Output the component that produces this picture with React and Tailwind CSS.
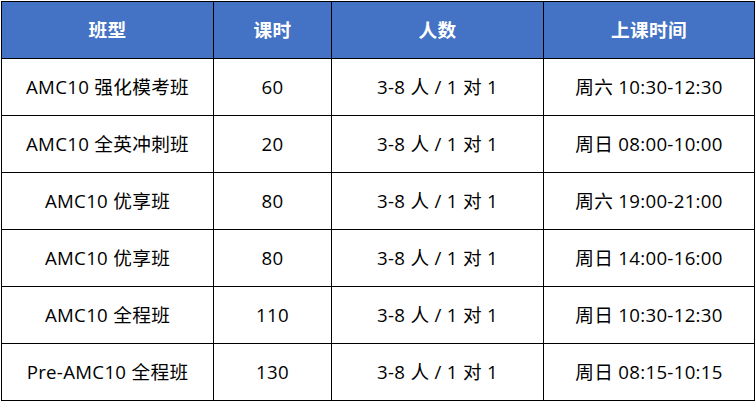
const rows = [
  ['AMC10 强化模考班', '60', '3-8 人 / 1 对 1', '周六 10:30-12:30'],
  ['AMC10 全英冲刺班', '20', '3-8 人 / 1 对 1', '周日 08:00-10:00'],
  ['AMC10 优享班', '80', '3-8 人 / 1 对 1', '周六 19:00-21:00'],
  ['AMC10 优享班', '80', '3-8 人 / 1 对 1', '周日 14:00-16:00'],
  ['AMC10 全程班', '110', '3-8 人 / 1 对 1', '周日 10:30-12:30'],
  ['Pre-AMC10 全程班', '130', '3-8 人 / 1 对 1', '周日 08:15-10:15'],
]

export default function App() {
  return (
    <div className="w-[756px] h-[403px] bg-white pt-px pl-px" style={{ fontFamily: '"Open Sans", "Noto Sans CJK SC", sans-serif' }}>
      <table className="border-collapse table-fixed w-[753px] text-[18.67px] tracking-[0.3px] text-black">
        <colgroup>
          <col className="w-[212px]" />
          <col className="w-[118px]" />
          <col className="w-[212px]" />
          <col className="w-[211px]" />
        </colgroup>
        <thead>
          <tr className="h-[57px] bg-[#4472c4] text-white">
            {['班型', '课时', '人数', '上课时间'].map(h => (
              <th key={h} className="border border-black font-bold text-center p-0">{h}</th>
            ))}
          </tr>
        </thead>
        <tbody>
          {rows.map((r, i) => (
            <tr key={i} className="h-[57px]">
              {r.map((c, j) => (
                <td key={j} className="border border-black text-center p-0">{c}</td>
              ))}
            </tr>
          ))}
        </tbody>
      </table>
    </div>
  )
}
